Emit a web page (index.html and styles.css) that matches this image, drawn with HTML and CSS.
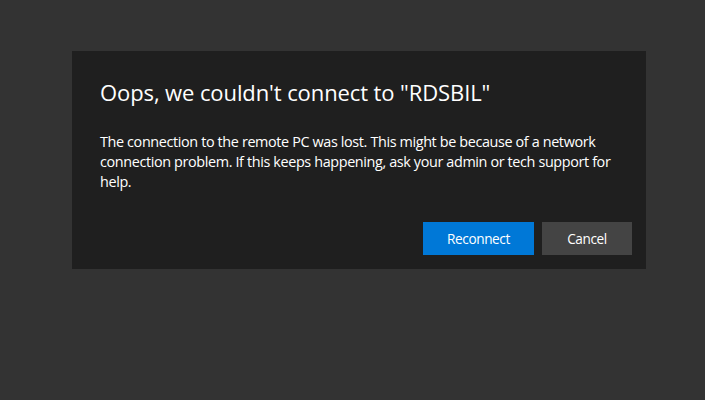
FILE: index.html
```html
<!DOCTYPE html>
<html lang="en">
<head>
    <meta charset="UTF-8">
    <title>Remote Desktop</title>
    <link rel="stylesheet" href="styles.css">
</head>
<body>

<div class="dialog">
    <h1 class="title">Oops, we couldn't connect to "RDSBIL"</h1>
    <p class="message">The connection to the remote PC was lost. This might be because of a network connection problem. If this keeps happening, ask your admin or tech support for help.</p>

    <div class="actions">
        <button class="btn btn-primary">Reconnect</button>
        <button class="btn btn-secondary">Cancel</button>
    </div>
</div>

</body>
</html>
```

FILE: styles.css
```css
body {
    margin: 0;
    height: 100vh;
    background-color: #333333;
    font-family: "Open Sans", "Noto Sans", Arial, sans-serif;
    color: #ffffff;
}

.dialog {
    width: 574px;
    height: 218px;
    margin: 51px 0 0 72px;
    box-sizing: border-box;
    padding: 0 14px 14px 28px;
    background-color: #1f1f1f;
    display: flex;
    flex-direction: column;
}

.title {
    margin: 27px 0 0 0;
    font-size: 22px;
    font-weight: 400;
    line-height: 28px;
    letter-spacing: -0.1px;
}

.message {
    margin: 26px 0 0 0;
    font-size: 14.4px;
    line-height: 20px;
    letter-spacing: -0.37px;
}

.actions {
    margin-top: auto;
    display: flex;
    justify-content: flex-end;
    gap: 8px;
}

.btn {
    height: 33px;
    border: none;
    padding: 0;
    color: #ffffff;
    font-family: inherit;
    font-size: 13.6px;
    letter-spacing: -0.4px;
    cursor: pointer;
}

.btn-primary {
    width: 111px;
    background-color: #0078d7;
}

.btn-secondary {
    width: 90px;
    background-color: #444444;
}
```
